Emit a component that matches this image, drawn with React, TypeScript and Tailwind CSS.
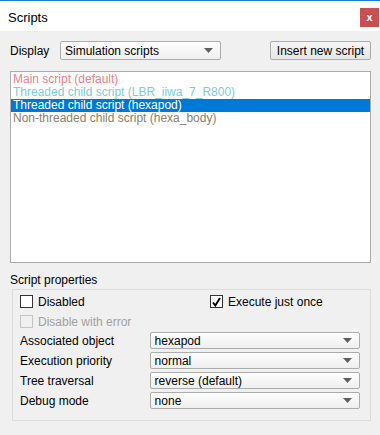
import React from "react";

const font = { fontFamily: '"Liberation Sans", Arial, sans-serif' };

function Arrow() {
  return (
    <svg width="9" height="5" viewBox="0 0 9 5" className="shrink-0">
      <path d="M0 0 L9 0 L4.5 5 Z" fill="#5f5f5f" />
    </svg>
  );
}

function Combo({ value, className }: { value: string; className: string }) {
  return (
    <div
      className={
        "flex items-center justify-between rounded-[2px] border border-[#acacac] bg-gradient-to-b from-[#fdfdfd] to-[#efefef] pl-[4px] pr-[7px] text-[12px] text-black " +
        className
      }
    >
      <span className="leading-none">{value}</span>
      <Arrow />
    </div>
  );
}

function Check({ checked, disabled }: { checked?: boolean; disabled?: boolean }) {
  return (
    <div
      className={
        "flex h-[13px] w-[13px] items-center justify-center border " +
        (disabled ? "border-[#c4c4c4] bg-[#f0f0f0]" : "border-[#333333] bg-white")
      }
    >
      {checked && (
        <svg width="9" height="10" viewBox="0 0 9 10">
          <path d="M1 5.5 L3.3 8.5 L8 1" stroke="#000" strokeWidth="1.9" fill="none" />
        </svg>
      )}
    </div>
  );
}

export default function App() {
  const items = [
    { t: "Main script (default)", c: "text-[#f0808c]" },
    { t: "Threaded child script (LBR_iiwa_7_R800)", c: "text-[#7ccdd5]" },
    { t: "Threaded child script (hexapod)", c: "text-white bg-[#0078d7]" },
    { t: "Non-threaded child script (hexa_body)", c: "text-[#8d8068]" },
  ];
  const rows = [
    ["Associated object", "hexapod"],
    ["Execution priority", "normal"],
    ["Tree traversal", "reverse (default)"],
    ["Debug mode", "none"],
  ];
  return (
    <div style={font} className="flex h-[435px] w-[380px] flex-col overflow-hidden bg-[#f0f0f0] text-[12px] text-black">
      <div className="h-[1px] bg-[#1a7fd4]" />
      <div className="flex h-[30px] items-start justify-between bg-white pl-[8px]">
        <span className="mt-[7px] text-[13px] text-black">Scripts</span>
        <div className="mr-[1px] mt-[7px] flex h-[19px] w-[19px] items-center justify-center bg-[#c75050] text-[11px] font-bold leading-none text-white">
          x
        </div>
      </div>
      <div className="mt-[10px] flex items-center pl-[10px] pr-[9px]">
        <span className="w-[50px]">Display</span>
        <Combo value="Simulation scripts" className="h-[19px] w-[161px]" />
        <div className="flex-1" />
        <div className="flex h-[19px] w-[101px] items-center justify-center rounded-[2px] border border-[#acacac] bg-gradient-to-b from-[#f6f6f6] to-[#e6e6e6] leading-none">
          Insert new script
        </div>
      </div>
      <div className="ml-[10px] mt-[11px] h-[192px] w-[361px] border border-[#acacac] bg-white">
        <div className="flex flex-col pt-[1px]">
          {items.map((it) => (
            <div key={it.t} className={"h-[13px] pl-[2px] leading-[13px] " + it.c}>
              {it.t}
            </div>
          ))}
        </div>
      </div>
      <div className="ml-[10px] mt-[9px] leading-[16px]">Script properties</div>
      <div className="ml-[12px] mt-[1px] flex h-[132px] w-[359px] flex-col border border-[#dcdcdc] bg-[#f0f0f0] pl-[7px] pr-[10px] pt-[5px]">
        <div className="flex h-[13px] items-center">
          <div className="flex w-[190px] items-center gap-[5px]">
            <Check />
            <span>Disabled</span>
          </div>
          <div className="flex items-center gap-[5px]">
            <Check checked />
            <span>Execute just once</span>
          </div>
        </div>
        <div className="mt-[7px] flex h-[13px] items-center gap-[5px]">
          <Check disabled />
          <span className="text-[#a0a0a0]">Disable with error</span>
        </div>
        <div className="mt-[4px] flex flex-col gap-[3px]">
          {rows.map(([l, v]) => (
            <div key={l} className="flex h-[17px] items-center">
              <span className="w-[130px]">{l}</span>
              <Combo value={v} className="h-[17px] w-[211px]" />
            </div>
          ))}
        </div>
      </div>
    </div>
  );
}
